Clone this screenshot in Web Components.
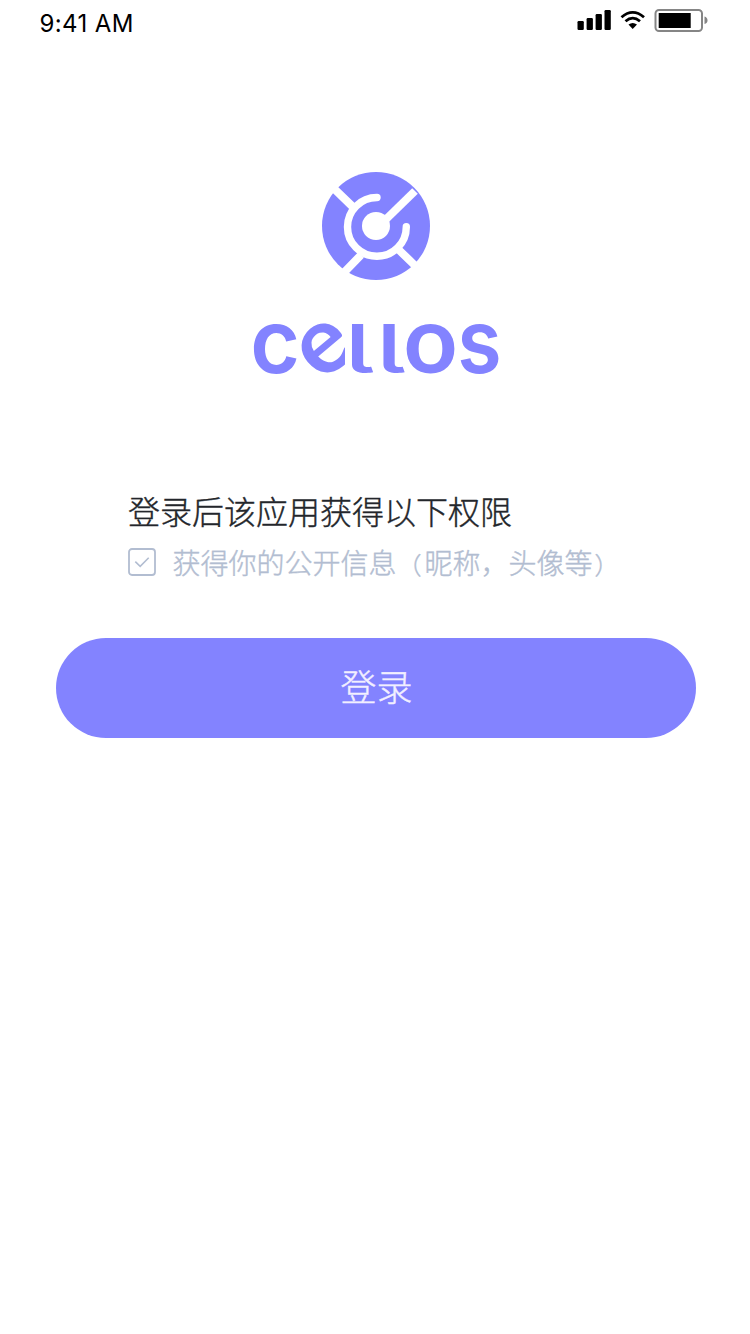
<!DOCTYPE html>
<html lang="zh-CN">
<head>
<meta charset="utf-8">
<title>Cellos</title>
<style>
html,body{margin:0;background:#fff}
body{font-family:Inter,"Noto Sans CJK SC",sans-serif}
</style>
</head>
<body>
<login-page></login-page>
<script>
const define = (name, html) => customElements.define(name, class extends HTMLElement {
  constructor() {
    super();
    const t = document.createElement('template');
    t.innerHTML = html;
    this.attachShadow({mode: 'open'}).append(t.content.cloneNode(true));
  }
});

define('status-bar', `
<style>
:host{display:flex;justify-content:space-between;align-items:center;height:40px;padding:0 42px 0 39.5px;box-sizing:border-box;color:#000}
.time{font-size:24px;line-height:30px;padding-top:7px;letter-spacing:.4px;font-weight:370}
svg{display:block}
</style>
<span class="time"><slot></slot></span>
<svg width="131" height="40" viewBox="577 0 131 40">
<rect x="577.5" y="21" width="6.3" height="9" rx="1.2"/>
<rect x="586.6" y="18" width="6.3" height="12" rx="1.2"/>
<rect x="595.6" y="14" width="6.3" height="16" rx="1.2"/>
<rect x="604.5" y="10" width="6.3" height="20" rx="1.2"/>
<g fill="none" stroke="#000" stroke-width="2.8">
<path d="M621.5 17.2Q632.7 7.5 644 17.2"/>
<path d="M625.5 21.2Q632.7 15 640 21.2"/>
</g>
<path d="M628.5 24.6Q632.7 21.3 637 24.6L632.7 29Z"/>
<rect x="655.5" y="10" width="46.5" height="21" rx="3.5" fill="none" stroke="#858585" stroke-width="2"/>
<rect x="658.7" y="13" width="32" height="15"/>
<path d="M704.5 16.5Q707.5 17.5 707.5 20.4Q707.5 23 704.5 24Z" fill="#858585"/>
</svg>`);

define('brand-mark', `
<style>:host{display:block;width:108px;height:108px}svg{display:block}</style>
<svg width="108" height="108" viewBox="322 172 108 108">
<circle cx="376" cy="226" r="54" fill="#8383ff"/>
<circle cx="376" cy="226" r="14" fill="#fff"/>
<g fill="none" stroke="#fff" stroke-width="7.4">
<path d="M376 229L415 191" stroke-width="8"/>
<path d="M377 197.5A29.4 29.4 0 1 0 406.3 226.8" stroke-linecap="round"/>
<path d="M333.5 188.2L353 207M344 272.5L361 255M416 266.5L399 250" stroke-width="8"/>
</g>
</svg>`);

define('brand-name', `
<style>
:host{display:block;width:252px;height:64px}
svg{display:block;overflow:visible}
text{font-family:Inter,sans-serif;font-weight:600;font-size:88px;fill:#8383ff}
.round{font-family:Lato,sans-serif;font-weight:700;font-size:94px}
.l{font-size:67px;font-feature-settings:"cv05" 1;font-weight:480}
</style>
<svg width="252" height="64" viewBox="250 316 252 64">
<clipPath id="e"><rect x="298" y="316" width="47" height="64"/></clipPath>
<text transform="translate(250.2 372.8) scale(.97 1)">c</text>
<g clip-path="url(#e)"><text class="round" transform="translate(321.6 383.3) rotate(-40)">e</text></g>
<text class="l" transform="translate(344.5 373) scale(1.55 1)">l</text>
<text class="l" transform="translate(376 373) scale(1.55 1)">l</text>
<text class="round" x="403.5" y="373">o</text>
<text transform="translate(457.3 373) scale(.92 1)">s</text>
</svg>`);

define('scope-item', `
<style>
:host{display:flex;align-items:center;height:40px;color:#b2bdd1;font-size:28px;line-height:40px;font-weight:300;white-space:nowrap;-webkit-text-stroke:.4px currentColor}
svg{display:block;flex:none;margin-right:16.5px}
span{padding-bottom:1px}
</style>
<svg width="28" height="28" viewBox="0 0 28 28" fill="none" stroke="currentColor" stroke-width="1.8">
<rect x="1" y="1" width="26" height="26" rx="3"/><path d="M7.3 13.7L12.2 18.3L20.7 9.8" stroke-width="1.6"/>
</svg><span><slot></slot></span>`);

define('login-button', `
<style>
:host{display:block}
button{display:block;width:100%;height:100px;border:0;border-radius:50px;background:#8383ff;color:#f2efff;font:300 36px/94px "Noto Sans CJK SC",sans-serif;padding:0 0 6px 1px;-webkit-text-stroke:.4px currentColor}
</style>
<button><slot></slot></button>`);

define('login-page', `
<style>
:host{display:flex;flex-direction:column;width:750px;height:1334px;background:#fff;font-family:"Noto Sans CJK SC",sans-serif}
status-bar{font-family:Inter,sans-serif}
.brand{display:flex;flex-direction:column;align-items:center;gap:36px;padding:132px 0 0 2px}
.scopes{padding:107px 0 0 128px}
h1{margin:0;font-size:32px;line-height:46px;font-weight:300;color:#23262b;-webkit-text-stroke:.4px currentColor}
scope-item{margin-top:9px}
.paren{display:inline-block;box-sizing:border-box;width:28px;font-size:24px;line-height:28px;padding-left:2px}
.paren.open{padding-left:1px}
login-button{margin:56px 54px 0 56px}
</style>
<status-bar>9:41 AM</status-bar>
<div class="brand"><brand-mark></brand-mark><brand-name></brand-name></div>
<div class="scopes"><h1>登录后该应用获得以下权限</h1><scope-item>获得你的公开信息<span class="paren open">（</span>昵称，头像等<span class="paren">）</span></scope-item></div>
<login-button>登录</login-button>`);
</script>
</body>
</html>
